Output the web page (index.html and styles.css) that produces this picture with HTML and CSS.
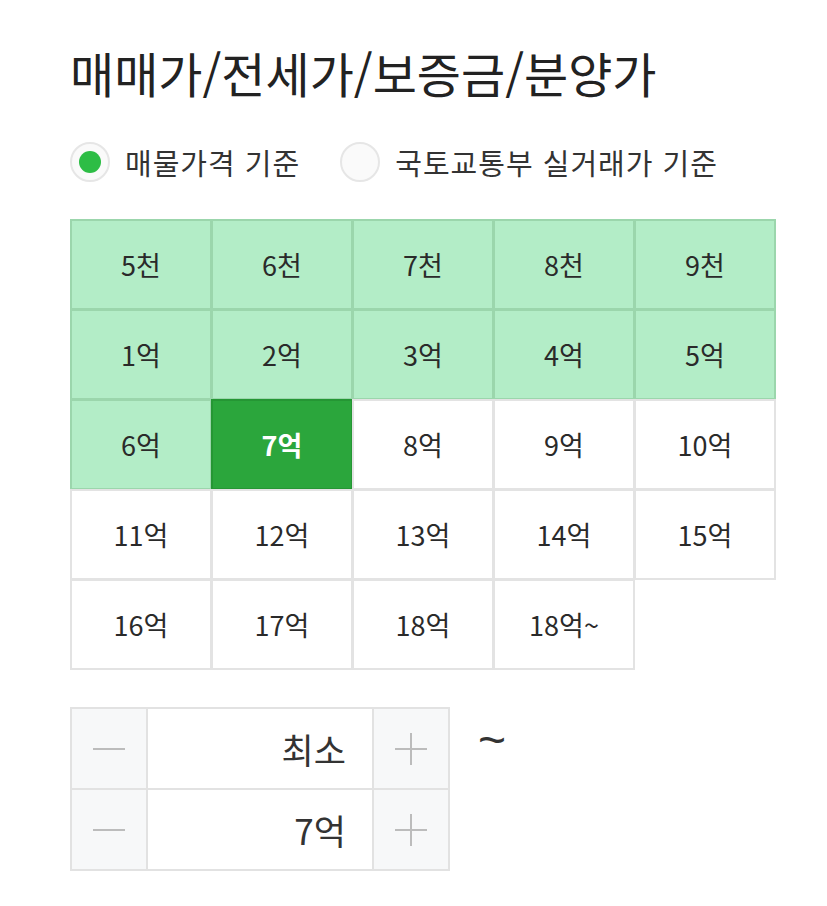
FILE: index.html
```html
<!DOCTYPE html>
<html lang="ko">
<head>
    <meta charset="UTF-8">
    <title>가격 필터</title>
    <link rel="stylesheet" href="styles.css">
</head>
<body>
    <div class="filtro">
        <h2 class="titulo">매매가/전세가/보증금/분양가</h2>

        <div class="opcoes">
            <label class="opcao ativo"><span class="radio"></span>매물가격 기준</label>
            <label class="opcao"><span class="radio"></span>국토교통부 실거래가 기준</label>
        </div>

        <div class="grade">
            <button class="faixa">5천</button>
            <button class="faixa">6천</button>
            <button class="faixa">7천</button>
            <button class="faixa">8천</button>
            <button class="faixa">9천</button>
            <button class="faixa">1억</button>
            <button class="faixa">2억</button>
            <button class="faixa">3억</button>
            <button class="faixa">4억</button>
            <button class="faixa">5억</button>
            <button class="faixa">6억</button>
            <button class="faixa selecionado">7억</button>
            <button>8억</button>
            <button>9억</button>
            <button>10억</button>
            <button>11억</button>
            <button>12억</button>
            <button>13억</button>
            <button>14억</button>
            <button>15억</button>
            <button>16억</button>
            <button>17억</button>
            <button>18억</button>
            <button>18억~</button>
        </div>

        <div class="intervalo">
            <div class="passos">
                <div class="linha">
                    <span class="botao menos"></span>
                    <span class="valor">최소</span>
                    <span class="botao mais"></span>
                </div>
                <div class="linha">
                    <span class="botao menos"></span>
                    <span class="valor">7억</span>
                    <span class="botao mais"></span>
                </div>
            </div>
            <span class="til">~</span>
        </div>
    </div>
</body>
</html>
```

FILE: styles.css
```css
body {
    margin: 0;
    background: #fff;
    color: #222;
    font-family: "Noto Sans CJK KR", "Noto Sans", sans-serif;
}

.filtro {
    padding: 32px 0 0 70px;
}

.titulo {
    margin: 0;
    font-size: 48px;
    font-weight: 400;
    line-height: 80px;
    color: #222;
}

.opcoes {
    display: flex;
    gap: 40px;
    margin-top: 20px;
    height: 60px;
    align-items: center;
}

.opcao {
    display: flex;
    align-items: center;
    gap: 15px;
    font-size: 29px;
    letter-spacing: 1px;
    color: #333;

    .radio {
        width: 36px;
        height: 36px;
        border: 2px solid #e6e6e6;
        border-radius: 50%;
        background: #fafafa;
        display: flex;
        align-items: center;
        justify-content: center;
    }
}

.opcao.ativo .radio::after {
    content: "";
    width: 22px;
    height: 22px;
    border-radius: 50%;
    background: #2dbd45;
}

.grade {
    display: grid;
    grid-template-columns: repeat(5, 141px);
    grid-auto-rows: 90px;
    margin-top: 27px;
    width: 706px;

    button {
        margin: 0 -1px -1px 0;
        border: 2px solid #e3e3e3;
        background: #fff;
        font-family: inherit;
        font-size: 27px;
        color: #2a2a2a;
        padding: 0;
    }
    button.faixa {
        background: #b3edc7;
        border-color: #9bd6ac;
    }
    button.selecionado {
        background: #2ba63c;
        border-color: #259634;
        color: #fff;
        font-weight: 700;
    }
}

.intervalo {
    display: flex;
    align-items: flex-start;
    gap: 28px;
    margin-top: 38px;
}

.passos {
    width: 376px;
    border: 2px solid #e2e2e2;

    .linha {
        display: flex;
        height: 79px;
    }
    .linha + .linha {
        border-top: 2px solid #e2e2e2;
    }
}

.botao {
    width: 74px;
    background: #f7f8f9;
    position: relative;
}

.menos { border-right: 2px solid #e2e2e2; }
.mais { border-left: 2px solid #e2e2e2; }

.botao::before,
.mais::after {
    content: "";
    position: absolute;
    left: 50%;
    top: 50%;
    width: 32px;
    height: 2px;
    margin: -1px 0 0 -16px;
    background: #bcbcbc;
}

.mais::after {
    width: 2px;
    height: 32px;
    margin: -16px 0 0 -1px;
}

.valor {
    flex: 1;
    display: flex;
    align-items: center;
    justify-content: flex-end;
    padding-right: 26px;
    font-size: 35px;
    color: #333;
}

.til {
    font-family: "Liberation Sans", sans-serif;
    font-size: 48px;
    line-height: 66px;
    color: #333;
}
```
